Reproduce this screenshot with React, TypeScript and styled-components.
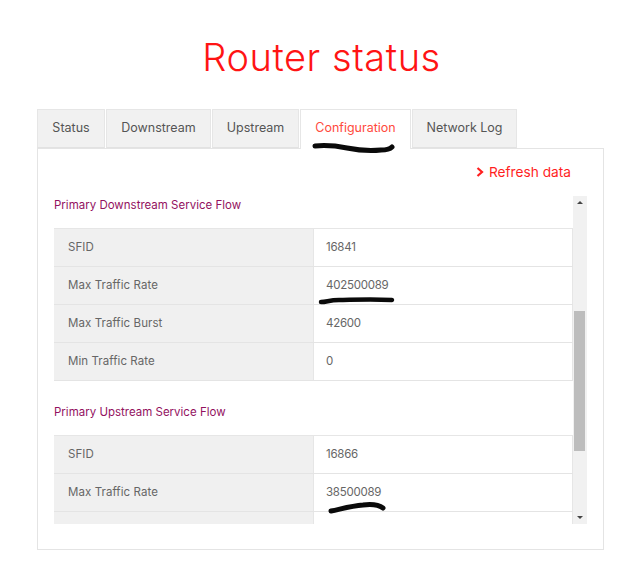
import React from "react";
import styled, { createGlobalStyle } from "styled-components";

const Global = createGlobalStyle`
  html, body { margin: 0; padding: 0; background: #fff; }
  body { font-family: "Inter", "Liberation Sans", sans-serif; }
`;

const Page = styled.div`
  width: 640px;
  height: 587px;
  overflow: hidden;
  position: relative;
`;

const Title = styled.h1`
  margin: 0;
  padding-top: 32px;
  height: 109px;
  box-sizing: border-box;
  text-align: center;
  padding-left: 3px;
  font-size: 38px;
  line-height: 50px;
  font-weight: 300;
  letter-spacing: 0.55px;
  color: #ff1414;
`;

const Shell = styled.div`
  margin-left: 37px;
  width: 567px;
`;

const TabBar = styled.div`
  display: flex;
  gap: 1px;
  height: 39px;
  position: relative;
  z-index: 1;
`;

const Tab = styled.div<{ $active?: boolean; $w: number }>`
  position: relative;
  width: ${(p) => p.$w}px;
  box-sizing: border-box;
  height: ${(p) => (p.$active ? 40 : 39)}px;
  display: flex;
  justify-content: center;
  padding-top: 9px;
  font-size: 12.5px;
  line-height: 18px;
  color: ${(p) => (p.$active ? "#ff4a3d" : "#555")};
  background: ${(p) => (p.$active ? "#fff" : "#f1f1f1")};
  border: 1px solid #e6e6e6;
  border-bottom: ${(p) => (p.$active ? "none" : "1px solid #e2e2e2")};
`;

const Panel = styled.div`
  box-sizing: border-box;
  height: 402px;
  border: 1px solid #e4e4e4;
  padding: 0 16px 0 16px;
`;

const RefreshRow = styled.div`
  display: flex;
  justify-content: flex-end;
  align-items: center;
  gap: 5px;
  height: 47px;
  padding: 0 16px 2px 0;
  box-sizing: border-box;
  font-size: 13.7px;
  color: #ff1f1f;
`;

const ScrollView = styled.div`
  display: flex;
  height: 328px;
`;

const ScrollContent = styled.div`
  width: 519px;
  height: 328px;
  overflow: hidden;
`;

const Heading = styled.h2<{ $top: number }>`
  margin: 0;
  padding-top: ${(p) => p.$top}px;
  height: 32px;
  box-sizing: content-box;
  font-size: 11.5px;
  line-height: 18px;
  font-weight: 400;
  color: #93125f;
`;

const Table = styled.div`
  border-top: 1px solid #e6e6e6;
`;

const Row = styled.div`
  display: grid;
  grid-template-columns: 260px 259px;
  height: 38px;
  box-sizing: border-box;
  border-bottom: 1px solid #e4e4e4;
  font-size: 11.5px;
  line-height: 36px;
  color: #666;
`;

const Label = styled.div`
  background: #f0f0f0;
  padding-left: 14px;
  letter-spacing: 0.08px;
  border-right: 1px solid #e6e6e6;
`;

const Value = styled.div`
  position: relative;
  padding-left: 12px;
  letter-spacing: -0.25px;
  border-right: 1px solid #e6e6e6;
`;

const Ink = styled.svg<{ $l: number; $t: number }>`
  position: absolute;
  left: ${(p) => p.$l}px;
  top: ${(p) => p.$t}px;
  overflow: visible;
  pointer-events: none;
  filter: blur(0.4px);
`;

const Scrollbar = styled.div`
  position: relative;
  width: 14px;
  height: 328px;
  background: #f1f1f1;
  display: flex;
  flex-direction: column;
  align-items: center;
`;

const Arrow = styled.div<{ $down?: boolean }>`
  width: 0;
  height: 0;
  margin: ${(p) => (p.$down ? "auto 0 5px" : "5px 0 0")};
  border-left: 3px solid transparent;
  border-right: 3px solid transparent;
  ${(p) => (p.$down ? "border-top: 3px solid #444;" : "border-bottom: 3px solid #444;")}
`;

const Thumb = styled.div`
  position: absolute;
  left: 1px;
  top: 115px;
  width: 11px;
  height: 140px;
  background: #bdbdbd;
`;

const rows1 = [
  ["SFID", "16841"],
  ["Max Traffic Rate", "402500089"],
  ["Max Traffic Burst", "42600"],
  ["Min Traffic Rate", "0"],
];
const rows2 = [
  ["SFID", "16866"],
  ["Max Traffic Rate", "38500089"],
  ["", ""],
];

const tabs: [string, number][] = [
  ["Status", 68],
  ["Downstream", 105],
  ["Upstream", 87],
  ["Configuration", 111],
  ["Network Log", 105],
];

const InkStroke = ({ l, t, d, sw = 4 }: { l: number; t: number; d: string; sw?: number }) => (
  <Ink $l={l} $t={t} width="90" height="14" viewBox="0 0 90 14">
    <path d={d} fill="none" stroke="#0a0a0a" strokeWidth={sw} strokeLinecap="round" strokeLinejoin="round" />
  </Ink>
);

export default function App() {
  return (
    <Page>
      <Global />
      <Title>Router status</Title>
      <Shell>
        <TabBar>
          {tabs.map(([t, w]) => (
            <Tab key={t} $w={w} $active={t === "Configuration"}>
              {t}
              {t === "Configuration" && (
                <InkStroke l={12} t={32} d="M2 4 C 12 3, 24 4, 34 6 S 58 9, 68 8 C 74 8, 77 7, 79 5" sw={5} />
              )}
            </Tab>
          ))}
        </TabBar>
        <Panel>
          <RefreshRow>
            <svg width="8" height="10" viewBox="0 0 8 10">
              <path d="M1.5 1 L6 5 L1.5 9" fill="none" stroke="#ff1f1f" strokeWidth="2.2" />
            </svg>
            Refresh data
          </RefreshRow>
          <ScrollView>
            <ScrollContent>
              <Heading $top={0}>Primary Downstream Service Flow</Heading>
              <Table>
                {rows1.map(([a, b]) => (
                  <Row key={a}>
                    <Label>{a}</Label>
                    <Value>
                      {b}
                      {b === "402500089" && (
                        <InkStroke l={5} t={30} d="M2 5 C 8 5, 10 3, 20 3 S 50 2, 73 3" sw={4.5} />
                      )}
                    </Value>
                  </Row>
                ))}
              </Table>
              <Heading $top={22}>Primary Upstream Service Flow</Heading>
              <Table>
                {rows2.map(([a, b], i) => (
                  <Row key={i}>
                    <Label>{a}</Label>
                    <Value>
                      {b}
                      {b === "38500089" && (
                        <InkStroke l={15} t={29} d="M2 8 C 12 6, 22 3, 34 2 C 42 1, 50 2, 54 5" sw={5} />
                      )}
                    </Value>
                  </Row>
                ))}
              </Table>
            </ScrollContent>
            <Scrollbar>
              <Arrow />
              <Thumb />
              <Arrow $down />
            </Scrollbar>
          </ScrollView>
        </Panel>
      </Shell>
    </Page>
  );
}
